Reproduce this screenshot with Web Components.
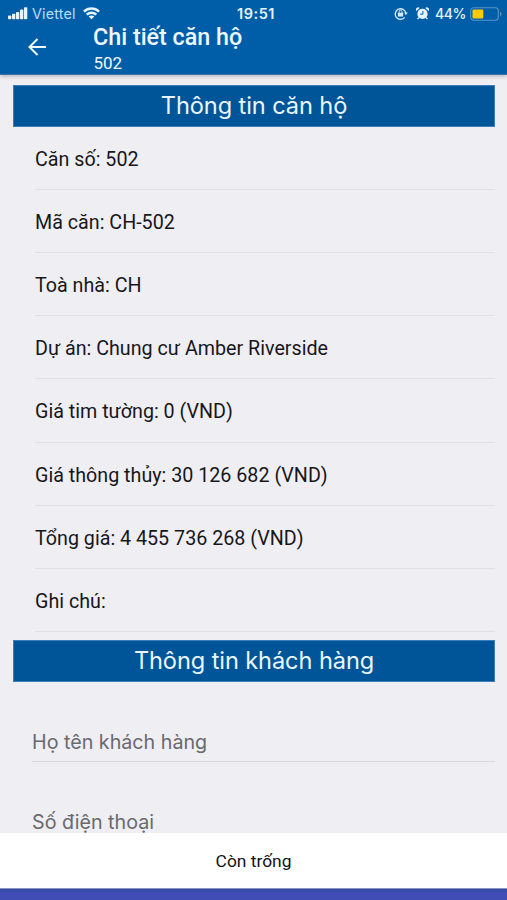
<!DOCTYPE html>
<html lang="vi">
<head>
<meta charset="utf-8">
<title>Chi tiết căn hộ</title>
<style>
html, body { margin: 0; height: 100%; }
body { overflow: hidden; }
</style>
</head>
<body>
<apartment-screen></apartment-screen>
<script>
function define(name, html) {
  const t = document.createElement('template');
  t.innerHTML = html;
  customElements.define(name, class extends HTMLElement {
    constructor() {
      super();
      this.attachShadow({ mode: 'open' }).append(t.content.cloneNode(true));
    }
  });
}

define('status-bar', `
<style>
:host { display: flex; align-items: center; height: 26px; padding: 1px 5px 0 8px; box-sizing: border-box; color: #e6f4ff; font: 14.5px/26px Inter, sans-serif; }
.side { flex: 1; display: flex; align-items: center; }
.right { justify-content: flex-end; }
.time { font-weight: 600; font-size: 14.5px; letter-spacing: .5px; margin-left: 2px; }
.carrier { margin: 0 7px 0 4px; color: #b9dcf8; font-size: 14.4px; letter-spacing: .15px; }
.pct { margin: 0 4px 0 6px; font-size: 14px; font-weight: 500; letter-spacing: -.4px; }
svg { display: block; flex: none; }
</style>
<div class="side">
  <svg width="20" height="13" viewBox="0 0 20 13" fill="#e6f4ff"><rect x="0" y="8.5" width="3.3" height="3.7" rx=".8"/><rect x="4" y="6.8" width="3.3" height="5.4" rx=".8"/><rect x="8" y="4.9" width="3.3" height="7.3" rx=".8"/><rect x="12" y="2.6" width="3.3" height="9.6" rx=".8"/><rect x="16" y=".2" width="3.3" height="12" rx=".8"/></svg>
  <span class="carrier">Viettel</span>
  <svg width="17" height="13" viewBox="0 0 17 13" fill="none" stroke="#e6f4ff" stroke-width="2.4"><path d="M.9 4.6C5.2.4 11.8.4 16.1 4.6"/><path d="M3.7 7.6c2.7-2.5 6.9-2.5 9.6 0"/><path d="M8.5 12.2 5.6 9.5c1.6-1.4 4.2-1.4 5.8 0z" fill="#e6f4ff" stroke="none"/></svg>
</div>
<span class="time">19:51</span>
<div class="side right">
  <svg width="14" height="13" viewBox="0 0 14 13" fill="none" stroke="#d5ebfc" stroke-width="1.3"><path d="M10.7 10.4A5.3 5.3 0 1 1 11.8 6.1"/><path d="M10.1 5.6h3.6l-1.8 2.7z" fill="#d5ebfc" stroke="none"/><rect x="3.9" y="5.7" width="5.2" height="3.9" rx=".5" fill="#d5ebfc" stroke="none"/><path d="M5 6V4.8a1.5 1.5 0 0 1 3 0V6" stroke-width="1"/></svg>
  <svg style="margin-left:8px" width="13" height="13" viewBox="0 0 13 13" fill="#e6f4ff"><circle cx="6.5" cy="6.9" r="5.1"/><path d="M.4 3.9A2.2 2.2 0 0 1 3.7 1zM12.6 3.9A2.2 2.2 0 0 0 9.3 1z"/><path d="m2.9 10.5-1.4 1.6m8.6-1.6 1.4 1.6" stroke="#e6f4ff" stroke-width="1.3"/><path d="M6.9 3.9v3.3H4.2" stroke="#005ea8" fill="none"/></svg>
  <span class="pct">44%</span>
  <svg width="32" height="14" viewBox="0 0 32 14"><rect x=".7" y=".7" width="27.6" height="12.6" rx="3" fill="none" stroke="#5794c7" stroke-width="1.1"/><rect x="2.5" y="2.5" width="10.8" height="9" rx="1" fill="#ffcc02"/><path d="M30 4.7q1.5.5 1.5 2.3T30 9.3z" fill="#5794c7"/></svg>
</div>`);

define('app-header', `
<style>
:host { display: block; height: 75px; background: #005ea8; border-bottom: 1px solid #3c72ad; box-shadow: 0 1px 4px rgba(0,0,0,.28); box-sizing: border-box; position: relative; z-index: 1; color: #eef8ff; font-family: Roboto, sans-serif; }
.bar { display: flex; align-items: flex-start; padding-left: 27px; }
svg { display: block; margin-top: 11px; flex: none; }
.titles { margin: -3.5px 0 0 46px; }
.title { font-size: 23.3px; line-height: 28px; font-weight: 500; white-space: nowrap; }
.sub { font-size: 17px; line-height: 22px; margin-top: 1.5px; padding-left: .5px; }
</style>
<status-bar></status-bar>
<div class="bar">
  <svg width="20" height="20" viewBox="0 0 20 20" fill="none" stroke="#eef8ff" stroke-width="2"><path d="M19 10H2.5M10.5 2 2.5 10l8 8"/></svg>
  <div class="titles"><div class="title"><slot name="title"></slot></div><div class="sub"><slot name="subtitle"></slot></div></div>
</div>`);

define('section-title', `
<style>
:host { display: block; height: 42px; margin: 0 12px 0 13px; box-sizing: border-box; background: #005498; border: 1px solid #3a7fba; color: #e9f6ff; text-align: center; font: 23.6px/40px Inter, sans-serif; letter-spacing: -.1px; }
</style><slot></slot>`);

define('info-row', `
<style>
:host { display: block; height: 63.12px; box-sizing: border-box; margin: 0 12px 0 35px; border-bottom: 1px solid #dfdfe4; color: #17171b; font: 19.7px/65.4px Roboto, sans-serif; white-space: nowrap; }
</style><slot></slot>`);

define('text-field', `
<style>
:host { display: block; height: 80px; box-sizing: border-box; margin: 0 12px 0 32px; padding-top: 40px; border-bottom: 1px solid #d8d8dd; color: #69696d; font: 19.7px/41px Inter, sans-serif; }
</style><slot></slot>`);

define('status-footer', `
<style>
:host { display: block; flex: none; background: #fff; position: relative; z-index: 1; }
.label { height: 55px; text-align: center; color: #111; font: 17.4px/56px Roboto, sans-serif; }
.strip { height: 12px; background: linear-gradient(#334b9f, #3f4db5 4px); border-top: 1px solid #8994c2; box-sizing: border-box; }
</style>
<div class="label"><slot></slot></div><div class="strip"></div>`);

define('apartment-screen', `
<style>
:host { display: flex; flex-direction: column; height: 900px; overflow: hidden; background: #efeef3; }
main { flex: 1; min-height: 0; overflow: hidden; padding-top: 10px; }
app-header { flex: none; }
.second { margin-top: 8px; }
</style>
<app-header><span slot="title">Chi tiết căn hộ</span><span slot="subtitle">502</span></app-header>
<main>
  <section-title>Thông tin căn hộ</section-title>
  <info-row>Căn số: 502</info-row>
  <info-row>Mã căn: CH-502</info-row>
  <info-row>Toà nhà: CH</info-row>
  <info-row>Dự án: Chung cư Amber Riverside</info-row>
  <info-row>Giá tim tường: 0 (VND)</info-row>
  <info-row>Giá thông thủy: 30 126 682 (VND)</info-row>
  <info-row>Tổng giá: 4 455 736 268 (VND)</info-row>
  <info-row>Ghi chú:</info-row>
  <section-title class="second">Thông tin khách hàng</section-title>
  <text-field>Họ tên khách hàng</text-field>
  <text-field>Số điện thoại</text-field>
</main>
<status-footer>Còn trống</status-footer>`);
</script>
</body>
</html>
